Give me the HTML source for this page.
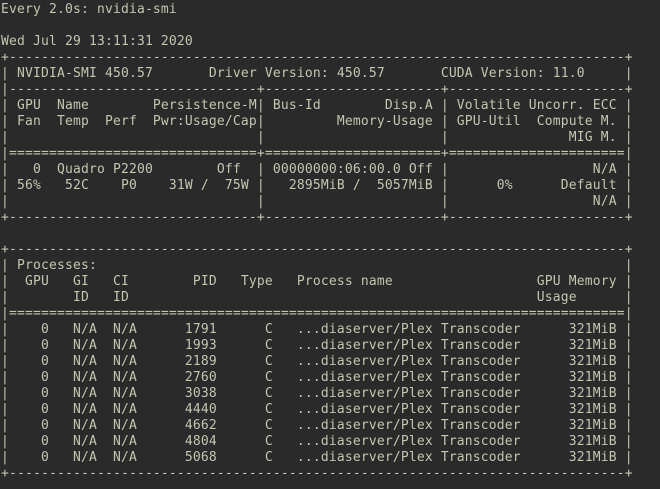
<!DOCTYPE html>
<html>
<head>
<meta charset="utf-8">
<style>
html,body{margin:0;padding:0;width:660px;height:489px;overflow:hidden;background:#2a2a2a;}
pre{position:absolute;left:1px;top:2px;margin:0;font-family:"DejaVu Sans Mono","Liberation Mono",monospace;font-size:13px;line-height:16px;letter-spacing:0.17px;color:#c5c5b0;white-space:pre;}
</style>
</head>
<body>
<pre>Every 2.0s: nvidia-smi

Wed Jul 29 13:11:31 2020
+-----------------------------------------------------------------------------+
| NVIDIA-SMI 450.57       Driver Version: 450.57       CUDA Version: 11.0     |
|-------------------------------+----------------------+----------------------+
| GPU  Name        Persistence-M| Bus-Id        Disp.A | Volatile Uncorr. ECC |
| Fan  Temp  Perf  Pwr:Usage/Cap|         Memory-Usage | GPU-Util  Compute M. |
|                               |                      |               MIG M. |
|===============================+======================+======================|
|   0  Quadro P2200        Off  | 00000000:06:00.0 Off |                  N/A |
| 56%   52C    P0    31W /  75W |   2895MiB /  5057MiB |      0%      Default |
|                               |                      |                  N/A |
+-------------------------------+----------------------+----------------------+

+-----------------------------------------------------------------------------+
| Processes:                                                                  |
|  GPU   GI   CI        PID   Type   Process name                  GPU Memory |
|        ID   ID                                                   Usage      |
|=============================================================================|
|    0   N/A  N/A      1791      C   ...diaserver/Plex Transcoder      321MiB |
|    0   N/A  N/A      1993      C   ...diaserver/Plex Transcoder      321MiB |
|    0   N/A  N/A      2189      C   ...diaserver/Plex Transcoder      321MiB |
|    0   N/A  N/A      2760      C   ...diaserver/Plex Transcoder      321MiB |
|    0   N/A  N/A      3038      C   ...diaserver/Plex Transcoder      321MiB |
|    0   N/A  N/A      4440      C   ...diaserver/Plex Transcoder      321MiB |
|    0   N/A  N/A      4662      C   ...diaserver/Plex Transcoder      321MiB |
|    0   N/A  N/A      4804      C   ...diaserver/Plex Transcoder      321MiB |
|    0   N/A  N/A      5068      C   ...diaserver/Plex Transcoder      321MiB |
+-----------------------------------------------------------------------------+</pre>
</body>
</html>
